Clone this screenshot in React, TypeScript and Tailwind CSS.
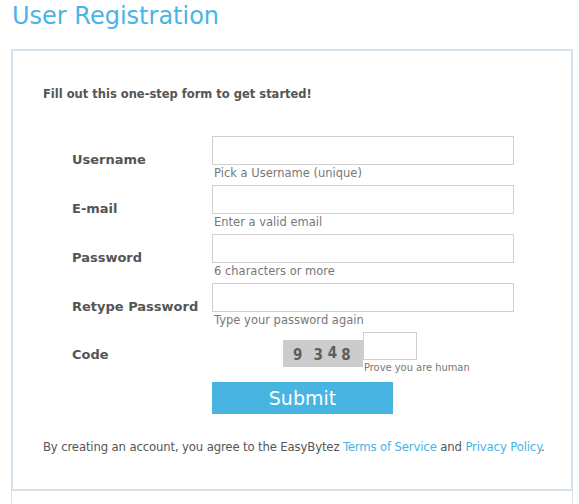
export default function App() {
  const fields = [
    { label: 'Username', hint: 'Pick a Username (unique)', type: 'text' },
    { label: 'E-mail', hint: 'Enter a valid email', type: 'text' },
    { label: 'Password', hint: '6 characters or more', type: 'password' },
    { label: 'Retype Password', hint: 'Type your password again', type: 'password' },
  ];

  return (
    <div className="min-h-screen bg-white font-['DejaVu_Sans',sans-serif] text-[#555]">
      <h1 className="pl-[12px] pt-[1px] text-[24px] leading-[30px] text-[#4ab4e4]">User Registration</h1>

      <div className="ml-[11px] mt-[18px] w-[562px] border-2 border-[#d6e2eb] px-[30px] pt-[35px] pb-[34px]">
        <p className="text-[11.5px] font-bold leading-[16px] text-[#555]">Fill out this one-step form to get started!</p>

        <form className="ml-[29px] mt-[34px] grid grid-cols-[140px_1fr] gap-y-[4px]">
          {fields.map((f) => (
            <div key={f.label} className="contents">
              <label className="self-center pt-[2px] text-[13px] font-bold text-[#555]">{f.label}</label>
              <div className="flex flex-col">
                <input type={f.type} className="h-[29px] w-[302px] border border-[#cfcfcf] bg-white px-1 text-[13px] outline-none" />
                <span className="pl-[2px] pt-[1px] text-[11.5px] leading-[15px] text-[#777]">{f.hint}</span>
              </div>
            </div>
          ))}

          <label className="self-center pt-[2px] text-[13px] font-bold text-[#555]">Code</label>
          <div className="flex pl-[71px]">
            <div className="mt-[8px] flex h-[27px] w-[80px] items-end bg-[#cccccc] pl-[10px] pb-[5px] font-['DejaVu_Sans_Condensed',sans-serif] text-[15px] font-bold leading-none text-[#5e5e5e]">
              <span className="mb-[-1px]">9</span>
              <span className="mb-[-1px] ml-[11px]">3</span>
              <span className="mb-[1px] ml-[5px]">4</span>
              <span className="mb-[-1px] ml-[4px]">8</span>
            </div>
            <div className="flex flex-col">
              <input type="text" className="h-[28px] w-[54px] border border-[#cfcfcf] bg-white outline-none" />
              <span className="pl-[1px] font-['DejaVu_Sans_Condensed',sans-serif] text-[11px] leading-[16px] text-[#777]">Prove you are human</span>
            </div>
          </div>

          <div />
          <button type="button" className="mt-[2px] h-[32px] w-[181px] bg-[#48b4e1] text-[19px] leading-none text-white">
            Submit
          </button>
        </form>

        <p className="mt-[24px] whitespace-nowrap font-['DejaVu_Sans_Condensed',sans-serif] text-[13px] leading-[17px] tracking-[-0.15px] text-[#555]">
          By creating an account, you agree to the EasyBytez{' '}
          <a className="text-[#48b4e1]">Terms of Service</a> and{' '}
          <a className="text-[#48b4e1]">Privacy Policy</a>.
        </p>
      </div>

      <div className="ml-[11px] h-[20px] w-[562px] border-x border-[#e2e2e2]" />
    </div>
  );
}
